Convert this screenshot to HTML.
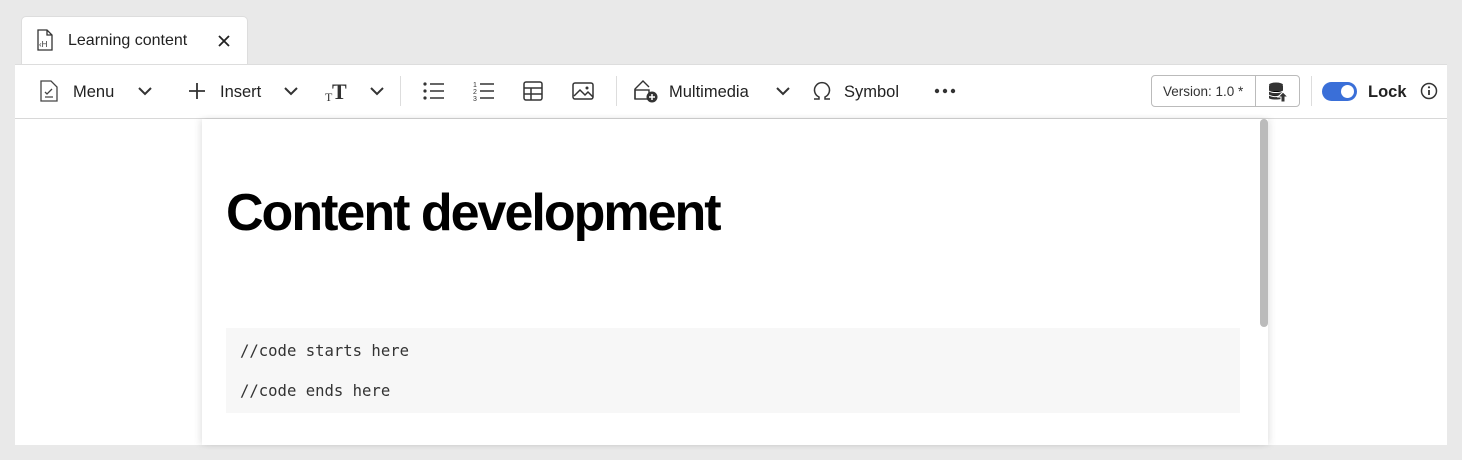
<!DOCTYPE html>
<html><head><style>
*{margin:0;padding:0;box-sizing:border-box}
body{width:1462px;height:460px;background:#e9e9e9;font-family:"Liberation Sans",sans-serif;position:relative;overflow:hidden;color:#222}
.tab{position:absolute;left:21px;top:16px;width:227px;height:49px;background:#fff;border:1px solid #ddd;border-bottom:none;border-radius:5px 5px 0 0}
.tab span{position:absolute;left:46px;top:15px;font-size:16px;color:#222}
.tb{position:absolute;left:15px;top:64px;width:1432px;height:55px;background:#fff;border-bottom:1px solid #d8d8d8;border-top:1px solid #ddd}
.t{position:absolute;top:18px;font-size:16.5px;color:#222}
.ic{position:absolute}
.sep{position:absolute;top:11px;width:1px;height:30px;background:#ddd}
.content{position:absolute;left:15px;top:119px;width:1432px;height:326px;background:#fff}
.page{position:absolute;left:187px;top:0;width:1066px;height:326px;background:#fff;box-shadow:-3px 0 6px rgba(0,0,0,.08),3px 0 6px rgba(0,0,0,.08)}
h1{position:absolute;left:24px;top:64px;font-size:52px;font-weight:bold;letter-spacing:-2px;color:#000;white-space:nowrap}
.code{position:absolute;left:24px;top:209px;width:1014px;height:85px;background:#f7f7f7;font-family:"DejaVu Sans Mono",monospace;font-size:15.6px;color:#333}
.code div{position:absolute;left:14px}
.sb{position:absolute;left:1058px;top:0;width:8px;height:208px;background:#bbb;border-radius:4px}
</style></head><body>
<div class="tab">
<svg class="ic" style="left:14px;top:12px" width="18" height="22" viewBox="0 0 18 22"><path d="M2 1h9l5 5v15H2z M11 1v5h5" fill="none" stroke="#333" stroke-width="1.3"/><text x="3" y="18" font-size="8" font-family="Liberation Sans" fill="#333">‹H</text></svg>
<span>Learning content</span>
<svg class="ic" style="left:196px;top:18px" width="12" height="12"><path d="M1 1l10 10M11 1L1 11" stroke="#222" stroke-width="1.8"/></svg>
</div>
<div class="tb">
<svg class="ic" style="left:25px;top:15px" width="18" height="22" viewBox="0 0 18 22"><path d="M1 1h10l6 6v14H1z" fill="none" stroke="#444" stroke-width="1.3"/><path d="M5 12l2 2 5-5M5 17h8" fill="none" stroke="#444" stroke-width="1.3"/></svg>
<div class="t" style="left:58px">Menu</div>
<svg class="ic" style="left:123px;top:21px" width="14" height="10"><path d="M1 2l6 6 6-6" fill="none" stroke="#333" stroke-width="2"/></svg>
<svg class="ic" style="left:173px;top:17px" width="18" height="18"><path d="M9 1v16M1 9h16" stroke="#333" stroke-width="1.8"/></svg>
<div class="t" style="left:205px">Insert</div>
<svg class="ic" style="left:269px;top:21px" width="14" height="10"><path d="M1 2l6 6 6-6" fill="none" stroke="#333" stroke-width="2"/></svg>
<svg class="ic" style="left:310px;top:15px" width="26" height="22"><text x="0" y="21" font-size="12" font-family="Liberation Serif" fill="#333">T</text><text x="7" y="19" font-size="22" font-weight="bold" font-family="Liberation Serif" fill="#333">T</text></svg>
<svg class="ic" style="left:355px;top:21px" width="14" height="10"><path d="M1 2l6 6 6-6" fill="none" stroke="#333" stroke-width="2"/></svg>
<div class="sep" style="left:385px"></div>
<svg class="ic" style="left:408px;top:16px" width="22" height="20"><g fill="#333"><circle cx="2" cy="3" r="1.6"/><circle cx="2" cy="10" r="1.6"/><circle cx="2" cy="17" r="1.6"/></g><path d="M7 3h14M7 10h14M7 17h14" stroke="#333" stroke-width="1.6"/></svg>
<svg class="ic" style="left:458px;top:15px" width="22" height="22"><text x="0" y="7" font-size="7" fill="#333">1</text><text x="0" y="14" font-size="7" fill="#333">2</text><text x="0" y="21" font-size="7" fill="#333">3</text><path d="M7 4h14M7 11h14M7 18h14" stroke="#333" stroke-width="1.6"/></svg>
<svg class="ic" style="left:508px;top:16px" width="20" height="20"><rect x="1" y="1" width="18" height="18" rx="2" fill="none" stroke="#333" stroke-width="1.5"/><path d="M1 7h18M1 13h18M8 7v12" stroke="#333" stroke-width="1.5"/></svg>
<svg class="ic" style="left:557px;top:17px" width="22" height="18"><rect x="1" y="1" width="20" height="16" rx="2" fill="none" stroke="#333" stroke-width="1.5"/><path d="M2 14l6-6 5 5 3-3 5 5" fill="none" stroke="#333" stroke-width="1.5"/><circle cx="15" cy="6" r="1.5" fill="#333"/></svg>
<div class="sep" style="left:601px"></div>
<svg class="ic" style="left:618px;top:14px" width="26" height="24"><path d="M2 20V10l8-8 6 6" fill="none" stroke="#333" stroke-width="1.4"/><rect x="2" y="11" width="14" height="9" fill="none" stroke="#333" stroke-width="1.4"/><circle cx="19" cy="18" r="5.5" fill="#333"/><path d="M19 15v6M16 18h6" stroke="#fff" stroke-width="1.5"/></svg>
<div class="t" style="left:654px">Multimedia</div>
<svg class="ic" style="left:761px;top:21px" width="14" height="10"><path d="M1 2l6 6 6-6" fill="none" stroke="#333" stroke-width="2"/></svg>
<svg class="ic" style="left:797px;top:16px" width="20" height="20"><path d="M2 18h5v-2a7.5 7.5 0 1 1 6 0v2h5" fill="none" stroke="#333" stroke-width="1.5"/></svg>
<div class="t" style="left:829px">Symbol</div>
<svg class="ic" style="left:919px;top:23px" width="22" height="6"><g fill="#333"><circle cx="3" cy="3" r="2.2"/><circle cx="11" cy="3" r="2.2"/><circle cx="19" cy="3" r="2.2"/></g></svg>
<div style="position:absolute;left:1136px;top:10px;width:149px;height:32px;border:1px solid #bbb;border-radius:4px">
<div style="position:absolute;left:11px;top:8px;font-size:13.5px;color:#333">Version: 1.0 *</div>
<div style="position:absolute;left:103px;top:0;width:1px;height:30px;background:#bbb"></div>
<svg class="ic" style="left:115px;top:5px" width="22" height="22"><ellipse cx="9" cy="4" rx="7" ry="2.5" fill="#333"/><path d="M2 5v12c0 2 14 2 14 0V5" fill="#333"/><path d="M2 10c3 2 11 2 14 0M2 14c3 2 8 2 10 1" stroke="#fff" stroke-width="1"/><path d="M16 11l-5 5h3v5h4v-5h3z" fill="#333" stroke="#fff" stroke-width="1"/></svg>
</div>
<div class="sep" style="left:1296px"></div>
<div style="position:absolute;left:1307px;top:17px;width:35px;height:19px;background:#3a6fd8;border-radius:10px"><div style="position:absolute;right:3px;top:3px;width:13px;height:13px;background:#fff;border-radius:50%"></div></div>
<div class="t" style="left:1353px;font-weight:bold">Lock</div>
<svg class="ic" style="left:1405px;top:17px" width="18" height="18"><circle cx="9" cy="9" r="7.5" fill="none" stroke="#333" stroke-width="1.5"/><path d="M9 8v5" stroke="#333" stroke-width="1.8"/><circle cx="9" cy="5.3" r="1.1" fill="#333"/></svg>
</div>
<div class="content">
<div class="page">
<h1>Content development</h1>
<div class="code"><div style="top:14px">//code starts here</div><div style="top:54px">//code ends here</div></div>
<div class="sb"></div>
</div>
</div>
</body></html>
